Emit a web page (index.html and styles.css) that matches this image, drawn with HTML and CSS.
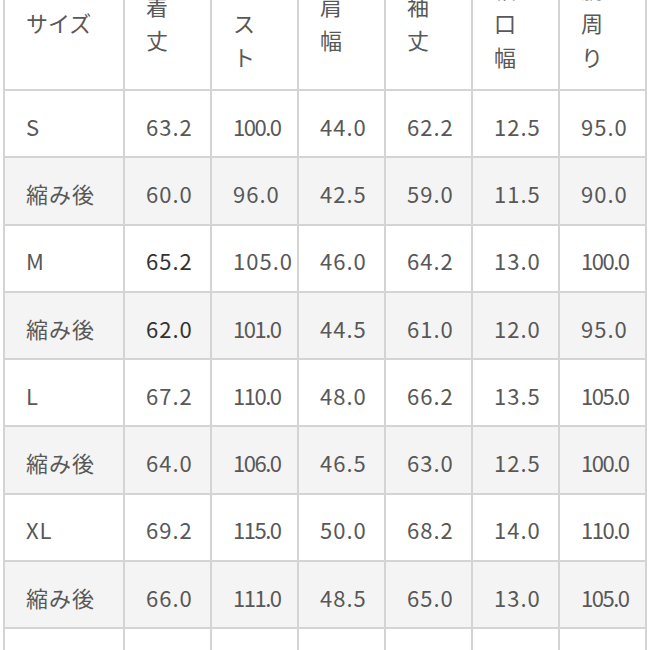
FILE: index.html
```html
<!DOCTYPE html>
<html lang="ja">
<head>
<meta charset="utf-8">
<link rel="stylesheet" href="styles.css">
</head>
<body>
<table class="chart">
  <colgroup>
    <col class="c-size"><col class="c-num"><col class="c-num"><col class="c-num"><col class="c-num"><col class="c-num"><col class="c-num">
  </colgroup>
  <thead>
    <tr class="head">
      <th>サイズ</th>
      <th>着<br>丈</th>
      <th>バ<br>ス<br>ト</th>
      <th>肩<br>幅</th>
      <th>袖<br>丈</th>
      <th>袖<br>口<br>幅</th>
      <th>胴<br>周<br>り</th>
    </tr>
  </thead>
  <tbody>
    <tr class="size"><td>S</td><td>63.2</td><td class="tight">100.0</td><td>44.0</td><td>62.2</td><td>12.5</td><td>95.0</td></tr>
    <tr class="after"><td>縮み後</td><td>60.0</td><td>96.0</td><td>42.5</td><td>59.0</td><td>11.5</td><td>90.0</td></tr>
    <tr class="size"><td>M</td><td class="dark">65.2</td><td>105.0</td><td>46.0</td><td>64.2</td><td>13.0</td><td class="tight">100.0</td></tr>
    <tr class="after"><td>縮み後</td><td class="dark">62.0</td><td class="tight">101.0</td><td>44.5</td><td>61.0</td><td>12.0</td><td>95.0</td></tr>
    <tr class="size"><td>L</td><td>67.2</td><td class="tight">110.0</td><td>48.0</td><td>66.2</td><td>13.5</td><td class="tight">105.0</td></tr>
    <tr class="after"><td>縮み後</td><td>64.0</td><td class="tight">106.0</td><td>46.5</td><td>63.0</td><td>12.5</td><td class="tight">100.0</td></tr>
    <tr class="size"><td>XL</td><td>69.2</td><td class="tight">115.0</td><td>50.0</td><td>68.2</td><td>14.0</td><td class="tight">110.0</td></tr>
    <tr class="after"><td>縮み後</td><td>66.0</td><td class="tight">111.0</td><td>48.5</td><td>65.0</td><td>13.0</td><td class="tight">105.0</td></tr>
    <tr class="size"><td></td><td></td><td></td><td></td><td></td><td></td><td></td></tr>
  </tbody>
</table>
</body>
</html>
```
FILE: styles.css
```css
html, body {
  margin: 0;
  padding: 0;
  background: #ffffff;
  overflow: hidden;
}
body {
  width: 650px;
  height: 650px;
}
.chart {
  border-collapse: collapse;
  table-layout: fixed;
  width: 644px;
  margin: -47px 0 0 3px;
  font-family: "Noto Sans CJK JP", "Noto Sans", sans-serif;
  font-size: 22px;
  color: #585858;
}
.c-size { width: 120px; }
.c-num { width: 87px; }
.chart th,
.chart td {
  border: 2px solid #d4d4d4;
  padding: 0 0 0 21px;
  text-align: left;
  white-space: nowrap;
  overflow: visible;
}
.chart tr.head {
  height: 136px;
}
.chart tbody tr {
  height: 67.3px;
}
.chart th {
  font-weight: 400;
  line-height: 34px;
  vertical-align: middle;
}
.chart td {
  line-height: 30px;
  padding-top: 4px;
  vertical-align: middle;
  letter-spacing: 1px;
}
.chart tr.after td {
  background: #f4f4f4;
}
.chart tr.size td {
  background: #ffffff;
}
.chart td.tight {
  letter-spacing: -1.5px;
}
.chart td.dark {
  color: #333333;
}
```
